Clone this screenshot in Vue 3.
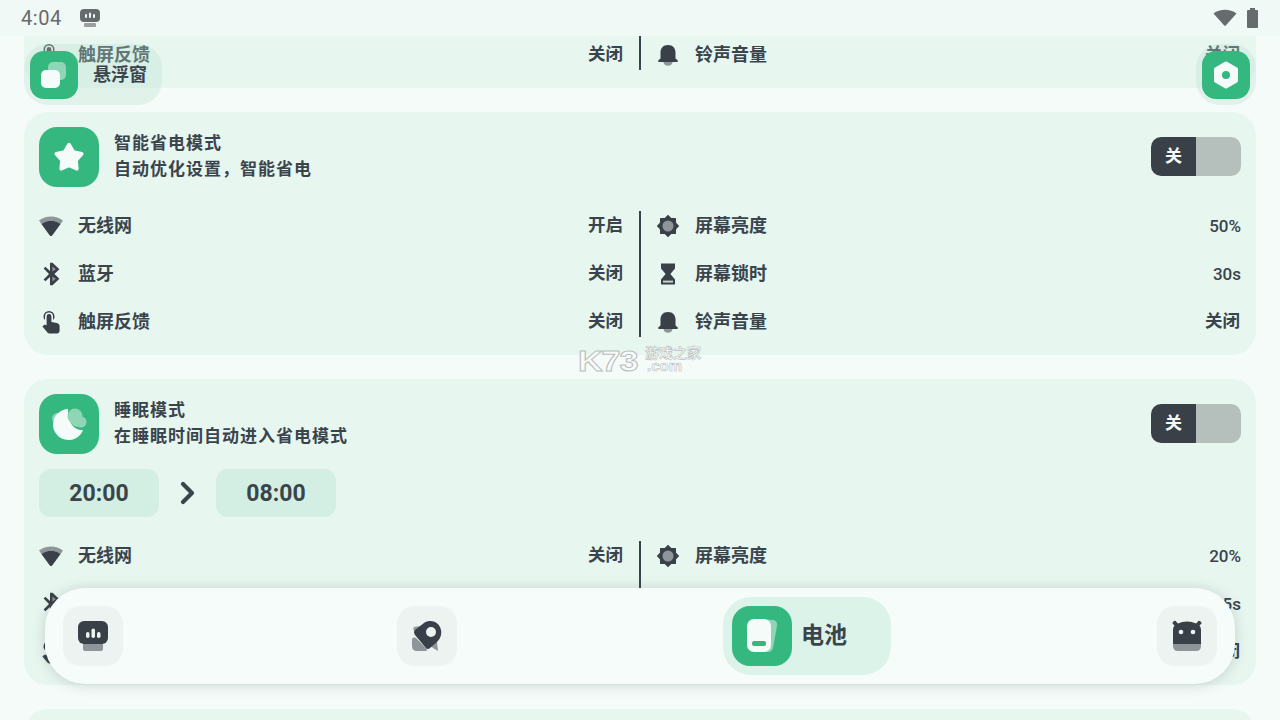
<script setup>
const dark = '#3a4048'
const gray = '#8f9699'

const icons = {
  wifi: [
    { d: 'M0 6.5C7 1 17 1 24 6.5L21.6 10C15.5 5.8 8.5 5.8 2.4 10Z', c: gray },
    { d: 'M2.4 10C8.5 5.8 15.5 5.8 21.6 10L13.2 21.4Q12 22.8 10.8 21.4Z', c: dark }
  ],
  bluetooth: [
    { d: 'M12 12L12.8 1.5L19.5 7.2ZM12 12L12.8 22.5L19.5 16.8Z', c: gray },
    { d: 'M11 .8L13.6 .8L20.4 7.2L15.4 12L20.4 16.8L13.6 23.2L11 23.2L11 15L6.4 19.2L4.6 17.4L10 12L4.6 6.6L6.4 4.8L11 9ZM13.4 4.4L13.4 9.6L16.8 7.2ZM13.4 14.4L13.4 19.6L16.8 16.8Z', c: dark }
  ],
  touch: [
    { d: 'M10 1A5.5 5.5 0 0 1 15.5 6.500C15.500 8 15 9 14 10L14 6.500A4 4 0 0 0 6 6.500L6 10C5 9 4.500 8 4.500 6.500A5.500 5.500 0 0 1 10 1Z', c: dark },
    { d: 'M7.600 6.500A2.400 2.400 0 0 1 12.400 6.500L12.400 12L17.800 13C19.600 13.400 20.600 14.600 20.600 16.200L20.600 20.500C20.600 22.200 19.400 23.500 17.800 23.500L10.500 23.500C9.600 23.500 9 23.200 8.400 22.500L3.400 16.600L4.800 15.200C5.400 14.700 6.400 14.700 7 15.100L7.600 15.500Z', c: dark }
  ],
  sun: [
    { d: 'M12 .8L15.300 3.900L19.900 4.100L20.100 8.700L23.200 12L20.100 15.300L19.900 19.900L15.300 20.100L12 23.200L8.700 20.100L4.100 19.900L3.900 15.300L.8 12L3.900 8.700L4.100 4.100L8.700 3.900Z', c: dark },
    { d: 'M12 6.500A5.500 5.500 0 1 1 12 17.500A5.500 5.500 0 1 1 12 6.500Z', c: gray }
  ],
  hourglass: [
    { d: 'M5 1.500L19 1.500L19 6.600L14.400 12L19 17.400L19 22.500L5 22.500L5 17.400L9.600 12L5 6.600Z', c: dark },
    { d: 'M7 18.600L17 18.600L17 20.600L7 20.600Z', c: '#c9d3d1' }
  ],
  bell: [
    { d: 'M12 2C17 2 19.500 5.500 19.500 9.500L19.500 15.500L21.800 17.600Q22.400 19 21 19L3 19Q1.600 19 2.200 17.600L4.500 15.500L4.500 9.500C4.500 5.500 7 2 12 2Z', c: dark },
    { d: 'M7.500 19L16.500 19C16.500 21.200 14.500 22.800 12 22.800C9.500 22.800 7.500 21.200 7.500 19Z', c: gray }
  ]
}

const col = (wifi, bt, touch) => [
  { icon: 'wifi', label: '无线网', value: wifi },
  { icon: 'bluetooth', label: '蓝牙', value: bt },
  { icon: 'touch', label: '触屏反馈', value: touch }
]
const col2 = (light, lock, ring) => [
  { icon: 'sun', label: '屏幕亮度', value: light },
  { icon: 'hourglass', label: '屏幕锁时', value: lock },
  { icon: 'bell', label: '铃声音量', value: ring }
]

const lastLeft = col('', '', '关闭').slice(2)
const lastRight = col2('', '', '关闭').slice(2)
const saveLeft = col('开启', '关闭', '关闭')
const saveRight = col2('50%', '30s', '关闭')
const sleepLeft = col('关闭', '关闭', '关闭')
const sleepRight = col2('20%', '15s', '关闭')

const isNum = (v) => /\d/.test(v)

const groups = [
  { id: 'prev', cut: true, left: lastLeft, right: lastRight },
  { id: 'save', icon: 'star', title: '智能省电模式', desc: '自动优化设置，智能省电', left: saveLeft, right: saveRight },
  { id: 'sleep', icon: 'moon', title: '睡眠模式', desc: '在睡眠时间自动进入省电模式', times: ['20:00', '08:00'], left: sleepLeft, right: sleepRight }
]
</script>

<template>
  <div class="screen">
    <div class="status">
      <span class="clock">4:04</span>
      <svg class="status-app" viewBox="0 0 20 20">
        <rect x="0" y="1" width="20" height="13" rx="4" fill="#666b6b" />
        <rect x="4" y="15" width="12" height="4" rx="1" fill="#9a9f9e" />
        <rect x="5" y="6" width="2" height="4" rx="1" fill="#f0f9f5" />
        <rect x="9" y="4.500" width="2" height="5.500" rx="1" fill="#f0f9f5" />
        <rect x="13" y="6" width="2" height="4" rx="1" fill="#f0f9f5" />
      </svg>
      <span class="status-gap"></span>
      <svg class="status-wifi" viewBox="0 0 24 17">
        <path d="M.5 4.500C7-.5 17-.5 23.500 4.500L13 16.200Q12 17.200 11 16.200Z" fill="#666b6b" />
      </svg>
      <svg class="status-batt" viewBox="0 0 11 20">
        <path d="M3 0H8V2H10Q11 2 11 3V19Q11 20 10 20H1Q0 20 0 19V3Q0 2 1 2H3Z" fill="#666b6b" />
      </svg>
    </div>

    <div class="scroller">
      <section v-for="g in groups" :key="g.id" class="card" :class="{ cut: g.cut }">
        <div v-if="!g.cut" class="head">
          <div class="head-icon">
            <svg v-if="g.icon === 'star'" viewBox="0 0 60 60">
              <polygon points="30,17.500 34.400,24.900 42.800,26.800 37.100,33.300 37.900,41.900 30,38.500 22.100,41.900 22.900,33.300 17.200,26.800 25.600,24.900" fill="#f5fbf8" stroke="#f5fbf8" stroke-width="3.500" stroke-linejoin="round" />
            </svg>
            <svg v-else viewBox="0 0 60 60">
              <ellipse cx="19" cy="24" rx="6" ry="5" fill="#8fd6b6" />
              <path d="M29 15A15.500 15.500 0 1 0 44 36C37 37 28 30 29 15Z" fill="#f5fbf8" />
              <circle cx="36" cy="22" r="7.500" fill="#8fd6b6" />
              <circle cx="42" cy="28" r="5.500" fill="#8fd6b6" />
              <path d="M30 24L40 30L38 33C34 32 31 29 30 24Z" fill="#8fd6b6" />
            </svg>
          </div>
          <div class="head-text">
            <div>{{ g.title }}</div>
            <div>{{ g.desc }}</div>
          </div>
          <div class="toggle"><span class="toggle-off">关</span><span class="toggle-rest"></span></div>
        </div>

        <div v-if="g.times" class="times">
          <div class="time">{{ g.times[0] }}</div>
          <svg class="arrow" viewBox="0 0 24 24">
            <path d="M7 3L16 12L7 21" fill="none" stroke="#3a444c" stroke-width="4.200" stroke-linecap="round" stroke-linejoin="round" />
          </svg>
          <div class="time">{{ g.times[1] }}</div>
        </div>

        <div class="rows">
          <div class="col col-left">
            <div v-for="r in g.left" :key="r.label" class="row">
              <svg class="row-icon" viewBox="0 0 24 24">
                <path v-for="(p, i) in icons[r.icon]" :key="i" :d="p.d" :fill="p.c" />
              </svg>
              <span class="row-label">{{ r.label }}</span>
              <span class="row-value">{{ r.value }}</span>
            </div>
          </div>
          <div class="divider"></div>
          <div class="col">
            <div v-for="r in g.right" :key="r.label" class="row">
              <svg class="row-icon" viewBox="0 0 24 24">
                <path v-for="(p, i) in icons[r.icon]" :key="i" :d="p.d" :fill="p.c" />
              </svg>
              <span class="row-label">{{ r.label }}</span>
              <span class="row-value" :class="{ num: isNum(r.value) }">{{ r.value }}</span>
            </div>
          </div>
        </div>
      </section>
      <section class="card next"></section>
    </div>

    <div class="float float-left">
      <div class="float-icon">
        <svg viewBox="0 0 48 48">
          <rect x="18" y="11" width="18" height="18" rx="5" fill="#8fd6b6" />
          <rect x="11" y="19" width="19" height="18" rx="5" fill="#f5fbf8" />
        </svg>
      </div>
      <span class="float-text">悬浮窗</span>
    </div>
    <div class="float float-right">
      <div class="float-icon">
        <svg viewBox="0 0 48 48">
          <polygon points="24,12.500 34,18.200 34,29.800 24,35.500 14,29.800 14,18.200" fill="#f5fbf8" stroke="#f5fbf8" stroke-width="4" stroke-linejoin="round" />
          <circle cx="24" cy="24" r="4" fill="#34b87f" />
        </svg>
      </div>
    </div>

    <div class="mark">
      <span class="mark-big">K73</span>
      <span class="mark-small"><span>游戏之家</span><span class="mark-com">.com</span></span>
    </div>

    <nav class="nav">
      <div class="nav-btn nav-first">
        <svg viewBox="0 0 60 60">
          <rect x="20" y="36" width="20" height="9" rx="2" fill="#8f9699" />
          <rect x="15" y="15" width="30" height="23" rx="6" fill="#3a4048" />
          <rect x="23" y="26" width="3.500" height="6" rx="1.700" fill="#ecf3f1" />
          <rect x="28.500" y="22.500" width="3.500" height="9.500" rx="1.700" fill="#ecf3f1" />
          <rect x="34" y="26" width="3.500" height="6" rx="1.700" fill="#ecf3f1" />
        </svg>
      </div>
      <div class="nav-btn">
        <svg viewBox="0 0 60 60">
          <path d="M15 34C15 31 18 31 20 33L29 42C31 44 30 45 28 45L20 45C17 45 15 43 15 40Z" fill="#8f9699" />
          <path d="M17 21L24 20L40 36L41 45L36 42L19 26Q15 24 17 21Z" fill="#8f9699" />
          <path d="M18 24L27 17C33 13 42 15 44 24C45 29 43 33 40 36L33 42Q31 44 29 42L18 29Q16 26 18 24Z" fill="#3a4048" />
          <circle cx="34" cy="26" r="5" fill="#ecf3f1" />
        </svg>
      </div>
      <div class="nav-active">
        <div class="nav-active-icon">
          <svg viewBox="0 0 60 60">
            <path d="M26 13L41 14Q46 15 45 20L41 42Q40 46 36 46L24 46Z" fill="#8fd6b6" />
            <rect x="15" y="13" width="24" height="33" rx="7" fill="#f5fbf8" />
            <rect x="20" y="35" width="14" height="5" rx="2" fill="#34b87f" />
          </svg>
        </div>
        <span class="nav-active-text">电池</span>
      </div>
      <div class="nav-btn">
        <svg viewBox="0 0 60 60">
          <path d="M16 38H44V40Q44 45 39 45H21Q16 45 16 40Z" fill="#8f9699" />
          <path d="M16 38V24Q16 21 17.500 19.500L16.500 18.500A2 2 0 1 1 19.500 16L21 17.500Q25 15.500 30 15.500Q35 15.500 39 17.500L40.500 16A2 2 0 1 1 43.500 18.500L42.500 19.500Q44 21 44 24V38Z" fill="#3a4048" />
          <circle cx="24" cy="26" r="2.300" fill="#ecf3f1" />
          <circle cx="36" cy="26" r="2.300" fill="#ecf3f1" />
        </svg>
      </div>
    </nav>
  </div>
</template>

<style scoped>
.screen {
  position: relative;
  width: 1280px;
  height: 720px;
  overflow: hidden;
  background: #f5fbf8;
  color: #3a444c;
  font-family: "Noto Sans CJK SC", "Noto Sans", sans-serif;
  font-weight: 700;
}
.status {
  display: flex;
  align-items: center;
  height: 36px;
  padding: 0 22px 0 21px;
  background: #f0f9f5;
}
.clock { font-family: Roboto, sans-serif; font-weight: 400; font-size: 20px; color: #666b6b; letter-spacing: .6px; }
.status-app { width: 20px; height: 20px; margin-left: 18px; }
.status-gap { flex: 1; }
.status-wifi { width: 24px; height: 17px; margin-top: -2px; }
.status-batt { width: 11px; height: 20px; margin-left: 10px; margin-top: -1px; }

.scroller { height: 684px; overflow: hidden; padding: 0 24px; display: flex; flex-direction: column; gap: 24px; }
.card { flex: none; background: #e8f6f0; border-radius: 24px; padding: 15px 15px 18px; }
.card.cut { padding-top: 4px; border-radius: 0 0 24px 24px; }
.card.cut .divider { margin-top: -4px; height: 34px; }
.card.next { height: 80px; }

.head { display: flex; align-items: center; gap: 15px; margin-bottom: 24px; }
.head-icon { width: 60px; height: 60px; border-radius: 18px; background: #34b87f; }
.head-icon svg { display: block; width: 60px; height: 60px; }
.head-text { flex: 1; font-size: 17px; line-height: 26.500px; letter-spacing: 1px; margin-top: -4px; }
.toggle { display: flex; width: 90px; height: 39px; border-radius: 10px; overflow: hidden; margin-top: -1px; }
.toggle-off { width: 45px; background: #3a4048; color: #f5fbf8; font-size: 17px; line-height: 36px; text-align: center; }
.toggle-rest { width: 45px; background: #b5bfbc; }

.times { display: flex; align-items: center; margin: -9px 0 24px; }
.time { width: 120px; height: 48px; border-radius: 12px; background: #d3eee2; font-family: Roboto, sans-serif; font-weight: 700; font-size: 23px; line-height: 50px; text-align: center; }
.arrow { width: 24px; height: 24px; margin: 0 16.500px; }

.rows { display: flex; }
.col { flex: 1; display: flex; flex-direction: column; gap: 18px; min-width: 0; }
.col-left { flex: none; width: 584px; }
.divider { width: 2px; margin: 0 15px 0 16px; background: #3a444c; }
.row { display: flex; align-items: center; height: 30px; gap: 15px; font-size: 18px; }
.row-icon { width: 24px; height: 24px; flex: none; }
.row-label { flex: 1; line-height: 24px; margin-top: -4px; }
.row-value { font-size: 17.500px; line-height: 24px; margin-top: -4px; margin-right: 1px; }
.col-left .row-value { margin-right: 0; }
.row-value.num { font-family: Roboto, sans-serif; font-weight: 500; font-size: 17px; margin-top: -1px; margin-right: 0; }

.float { position: absolute; top: 44px; height: 61px; border-radius: 24px; background: rgba(180, 225, 205, .32); display: flex; align-items: center; }
.float-left { left: 24px; width: 138px; padding-left: 6px; box-sizing: border-box; }
.float-right { left: 1196px; width: 60px; padding-left: 6px; box-sizing: border-box; }
.float-icon { width: 48px; height: 48px; border-radius: 14px; background: #34b87f; flex: none; }
.float-icon svg { display: block; width: 48px; height: 48px; }
.float-text { margin-left: 15px; font-size: 18px; line-height: 20px; margin-top: -3px; }

.mark { position: absolute; left: 578px; top: 345px; display: flex; gap: 5px; color: #fff; }
.mark-big { width: 62px; white-space: nowrap; transform: scaleX(1.14); transform-origin: left; font-family: "Liberation Sans", sans-serif; font-weight: 700; font-size: 30px; line-height: 30px; letter-spacing: -1px; color: #f8fbfa; -webkit-text-stroke: 1px #b8bebd; margin-top: 1px; }
.mark-small { display: flex; flex-direction: column; font-size: 14px; line-height: 14px; color: #f8fbfa; -webkit-text-stroke: .6px #b8bebd; }
.mark-com { font-family: "Liberation Sans", sans-serif; font-size: 15px; line-height: 14px; margin-left: 2px; }

.nav {
  position: absolute;
  left: 45px;
  top: 588px;
  width: 1190px;
  height: 96px;
  box-sizing: border-box;
  padding-left: 18px;
  display: flex;
  align-items: center;
  border-radius: 40px;
  background: #f5fcf9;
  box-shadow: 0 1px 14px rgba(40, 70, 60, .2);
}
.nav-btn { width: 60px; height: 60px; border-radius: 18px; background: #ecf3f1; margin-right: 266px; flex: none; }
.nav-btn svg { display: block; width: 60px; height: 60px; }
.nav-first { margin-right: 274px; }
.nav-active { width: 168px; height: 78px; box-sizing: border-box; padding-left: 9px; border-radius: 28px; background: #dcf3e9; margin-right: 266px; display: flex; align-items: center; gap: 9px; flex: none; }
.nav-active-icon { width: 60px; height: 60px; border-radius: 18px; background: #34b87f; }
.nav-active-icon svg { display: block; width: 60px; height: 60px; }
.nav-active-text { font-size: 23px; line-height: 30px; margin-top: -7px; }
</style>
